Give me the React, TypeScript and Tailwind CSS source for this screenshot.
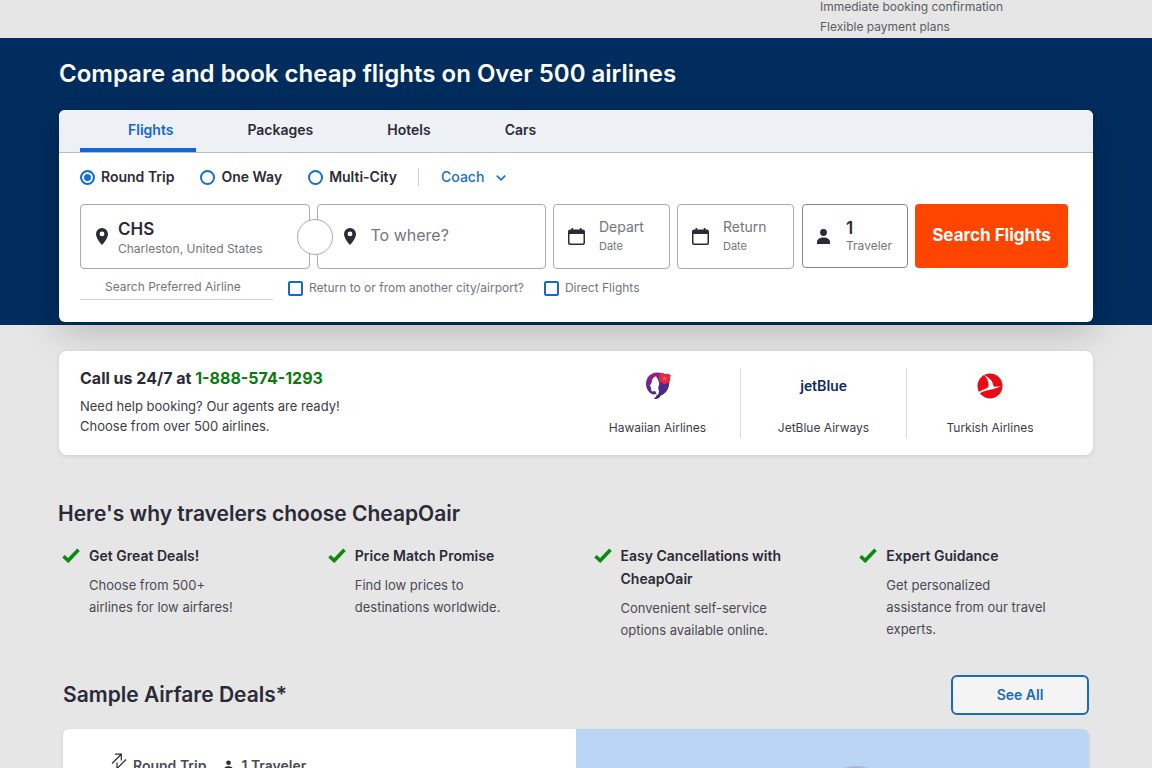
import React from "react";

const tabs = ["Flights", "Packages", "Hotels", "Cars"];

const reasons = [
  { title: "Get Great Deals!", text: "Choose from 500+ airlines for low airfares!" },
  { title: "Price Match Promise", text: "Find low prices to destinations worldwide." },
  {
    title: "Easy Cancellations with CheapOair",
    text: "Convenient self-service options available online.",
  },
  { title: "Expert Guidance", text: "Get personalized assistance from our travel experts." },
];

function Pin() {
  return (
    <svg viewBox="0 0 12 17" className="h-[17px] w-3 shrink-0 fill-[#2b2b37]" aria-hidden="true">
      <path
        fillRule="evenodd"
        d="M6 0a6 6 0 0 0-6 6c0 4.2 4.6 9.300 6 11 1.400-1.700 6-6.800 6-11a6 6 0 0 0-6-6Zm0 8.300a2.400 2.400 0 1 1 0-4.800 2.400 2.400 0 0 1 0 4.800Z"
      />
    </svg>
  );
}

function Calendar() {
  return (
    <svg viewBox="0 0 17 17" className="size-[17px] shrink-0" aria-hidden="true">
      <path
        fill="#2b2b37"
        fillRule="evenodd"
        d="M3.500 0h1.700v1.500h6.600V0h1.700v1.500H15a2 2 0 0 1 2 2V15a2 2 0 0 1-2 2H2a2 2 0 0 1-2-2V3.500a2 2 0 0 1 2-2h1.500V0ZM1.500 6v8.500a1 1 0 0 0 1 1h12a1 1 0 0 0 1-1V6h-14Z"
      />
    </svg>
  );
}

function Person({ className }: { className: string }) {
  return (
    <svg viewBox="0 0 13 15" className={className} aria-hidden="true">
      <circle cx="6.500" cy="3.500" r="3.400" />
      <path d="M0 15v-1.800C0 10.400 2.600 8.600 6.500 8.600s6.500 1.800 6.500 4.600V15H0Z" />
    </svg>
  );
}

function Tick() {
  return (
    <svg viewBox="0 0 18 15" className="mt-1 h-[15px] w-[18px] shrink-0" aria-hidden="true">
      <path d="M1.500 8.200 6.200 12.600 16.500 1.700" fill="none" stroke="#0a8a0f" strokeWidth="3.600" />
    </svg>
  );
}

function HawaiianLogo() {
  return (
    <svg viewBox="0 0 26 28" className="h-7 w-[26px]" aria-hidden="true">
      <defs>
        <linearGradient id="pualani" x1="0" y1="0" x2="0.300" y2="1">
          <stop offset="0" stopColor="#b01783" />
          <stop offset="0.500" stopColor="#5c2d91" />
          <stop offset="1" stopColor="#37277d" />
        </linearGradient>
      </defs>
      <path
        fill="url(#pualani)"
        d="M12 .5C5.500.5 1 5.500 1 12c0 5 3 9 7 10.500l3-.5c1 1.500-.2 3.500-2.500 4.600 3 1.200 6-.2 7.200-3.100C21 21.500 24 17 24.300 10L22 4C19.500 1.500 16 .5 12 .5Z"
      />
      <path
        fill="#fff"
        d="M11 4.200C8.600 4.900 7.200 6.500 7 9l-.6 2-1.700 2.900 1.300.9-.3 1.300.7.8-.2 1.900c.5 1.100 2.300.8 3.800.3 1.300 1.500 1.600 3 1.300 4.900 2-1.200 2.900-3.200 2.600-5.500-.9-2-.9-3.800.2-5.700.3-2.800-1-5.600-3.100-8.600Z"
      />
      <path fill="#4b2a88" d="M15.500 11c1.500 3 1.800 8-.5 12.500 5.500-2 8.800-6.500 9.300-13.500l-4-2Z" />
      <path
        fill="#e8283f"
        d="M14.500 2.500c1.500-1.800 4.500-1.500 5.500-.5 2-.8 4.500-.3 6 1.500-.8 1-1 2-.8 3.500.2 2.200-1.200 4-3.200 4.200-2 1.300-4 1-5.200-.7-2-.7-3.300-2-2.500-3.800-.5-1.700-.3-3.200.2-4.200Z"
      />
      <path fill="#ee5560" d="m19.500 4 .9 1.500 1.800.3-1.300 1.200.2 1.700-1.600-.8-1.600.8.3-1.700-1.200-1.200 1.700-.3Z" />
    </svg>
  );
}

function TurkishLogo() {
  return (
    <svg viewBox="0 0 26 26" className="size-[26px]" aria-hidden="true">
      <circle cx="13" cy="13" r="12.500" fill="#ea0a14" />
      <path
        fill="#fff"
        d="M6.800 2c5.200 2.200 9.200 6.300 9.400 10.300.1 1 .8 1.500 1.900 1.400l6-.5c-5.500 2.600-10 3.200-14.500 4.400-3 .8-5.500 1.800-7 3.100l-1-1.700c2.200-1.400 4.600-2.400 7-3.300 2-.8 3.200-2 3-4.500C11.400 7.700 9.700 4.500 6.800 2Z"
      />
    </svg>
  );
}

function DateField({ label }: { label: string }) {
  return (
    <button
      type="button"
      className="flex h-[65px] w-[117px] items-center gap-[14px] rounded border border-[#a9a9ae] bg-white pl-[14px] text-left text-[#75757d]"
    >
      <Calendar />
      <span className="flex flex-col pb-px">
        <span className="text-sm leading-5">{label}</span>
        <span className="text-[11px] leading-[18px]">Date</span>
      </span>
    </button>
  );
}

function Radio({ label, checked }: { label: string; checked?: boolean }) {
  return (
    <label className="flex items-center gap-[6px] text-sm leading-5 font-semibold text-[#2b2b37]">
      <input
        type="radio"
        name="trip"
        defaultChecked={checked}
        className="size-[15px] appearance-none rounded-full border-2 border-[#1470cc] bg-white checked:bg-[#1470cc] checked:shadow-[inset_0_0_0_2px_#fff]"
      />
      {label}
    </label>
  );
}

function Check({ label }: { label: string }) {
  return (
    <label className="flex items-center gap-[6px] text-xs leading-5 text-[#75757d]">
      <input
        type="checkbox"
        className="size-[15px] appearance-none rounded-[2px] border-2 border-[#1a6bb5] bg-white"
      />
      {label}
    </label>
  );
}

function SearchCard() {
  return (
    <div className="rounded-md bg-white shadow-[0_8px_40px_rgba(0,0,0,0.22)]">
      <nav className="flex h-[43px] gap-[3px] rounded-t-md border-b border-[#b9bec6] bg-[#edf0f5] pl-[21px]">
        {tabs.map((tab, i) => (
          <a
            key={tab}
            href="#"
            className={
              i === 0
                ? "border-b-4 border-[#1468c8] pt-[10px] pr-[23px] pl-12 text-sm leading-5 font-semibold text-[#1468c8]"
                : "pt-[10px] pr-[23px] pl-12 text-sm leading-5 font-semibold text-[#2b2b37]"
            }
          >
            {tab}
          </a>
        ))}
      </nav>
      <form className="flex flex-col pt-[14px] pr-[25px] pb-[22px] pl-[21px]">
        <div className="flex items-center">
          <div className="flex items-center gap-[26px]">
            <Radio label="Round Trip" checked />
            <Radio label="One Way" />
            <Radio label="Multi-City" />
          </div>
          <span className="mr-[22px] ml-[21px] h-[18px] w-px bg-[#cfcfd4]" />
          <div className="grid items-center">
            <select
              aria-label="Cabin class"
              className="col-start-1 row-start-1 appearance-none bg-transparent pr-[21px] text-sm leading-5 font-medium text-[#1470cc]"
            >
              <option>Coach</option>
            </select>
            <svg
              viewBox="0 0 10 6"
              className="pointer-events-none col-start-1 row-start-1 mt-[2px] h-[6px] w-[10px] justify-self-end"
              aria-hidden="true"
            >
              <path d="m.8.600 4.200 4.200L9.200.6" fill="none" stroke="#1470cc" strokeWidth="1.600" />
            </svg>
          </div>
        </div>
        <div className="mt-[17px] flex gap-[7px]">
          <div className="relative grid min-w-0 flex-1 grid-cols-2 gap-[7px]">
            <button
              type="button"
              className="flex h-[65px] items-center gap-[10px] rounded border border-[#a9a9ae] bg-white pl-[15px] text-left"
            >
              <Pin />
              <span className="flex flex-col pt-[5px]">
                <span className="text-[17px] leading-5 font-semibold text-[#2b2b37]">CHS</span>
                <span className="text-xs leading-5 text-[#75757d]">Charleston, United States</span>
              </span>
            </button>
            <div className="flex h-[65px] items-center gap-[15px] rounded border border-[#a9a9ae] bg-white pl-[26px]">
              <Pin />
              <input
                aria-label="To where?"
                placeholder="To where?"
                className="w-full min-w-0 bg-transparent pb-[3px] text-base outline-none placeholder:text-[#75757d]"
              />
            </div>
            <button
              type="button"
              aria-label="Swap"
              className="absolute top-[15px] left-1/2 size-9 -translate-x-4 rounded-full border border-[#a9a9ae] bg-white"
            />
          </div>
          <DateField label="Depart" />
          <DateField label="Return" />
          <button
            type="button"
            className="ml-px flex h-16 w-[106px] items-center gap-4 rounded border border-[#85858c] bg-white pl-[14px] text-left"
          >
            <Person className="h-[15px] w-[13px] fill-[#2b2b37]" />
            <span className="flex flex-col pt-px">
              <span className="text-[17px] leading-[18px] font-semibold text-[#2b2b37]">1</span>
              <span className="text-xs leading-[18px] text-[#75757d]">Traveler</span>
            </span>
          </button>
          <button
            type="submit"
            className="h-16 w-[153px] rounded bg-[#ff4500] text-[17px] font-bold whitespace-nowrap text-white"
          >
            Search Flights
          </button>
        </div>
        <div className="mt-[9px] flex items-start">
          <input
            aria-label="Search Preferred Airline"
            placeholder="Search Preferred Airline"
            className="mr-[15px] h-[22px] w-[193px] border-b border-[#cfcfd4] bg-transparent pr-2 pb-[5px] pl-[25px] text-xs outline-none placeholder:text-[#75757d]"
          />
          <div className="flex gap-5">
            <Check label="Return to or from another city/airport?" />
            <Check label="Direct Flights" />
          </div>
        </div>
      </form>
    </div>
  );
}

export default function App() {
  return (
    <div className="h-screen overflow-hidden bg-[#e6e6e6] font-['Inter',sans-serif] text-[#2b2b37]">
      <div className="flex h-[38px] flex-col justify-end overflow-hidden pb-px pl-[820px] text-xs leading-5 text-[#5c5c64]">
        <p>Immediate booking confirmation</p>
        <p>Flexible payment plans</p>
      </div>

      <section className="bg-[#002d5e] px-[59px] pt-5 pb-[3px]">
        <h1 className="mb-5 text-2xl leading-8 font-semibold text-white">
          Compare and book cheap flights on Over 500 airlines
        </h1>
        <SearchCard />
      </section>

      <section className="mx-[59px] mt-[26px] flex justify-between rounded-lg bg-white py-[17px] pr-5 pl-[21px] shadow-[0_1px_4px_rgba(0,0,0,0.12)]">
        <div>
          <h2 className="text-base leading-5 font-bold">
            Call us 24/7 at{" "}
            <a href="tel:1-888-574-1293" className="text-[#0a7a0f]">
              1-888-574-1293
            </a>
          </h2>
          <p className="mt-2 text-[13px] leading-5 text-[#3c3c46]">
            Need help booking? Our agents are ready!
            <br />
            Choose from over 500 airlines.
          </p>
        </div>
        <ul className="flex min-h-[70px] text-center text-xs leading-5 text-[#3c3c46]">
          <li className="flex w-[166px] flex-col items-center justify-between border-r border-[#d9d9dc] pt-1">
            <HawaiianLogo />
            <span>Hawaiian Airlines</span>
          </li>
          <li className="flex w-[166px] flex-col items-center justify-between border-r border-[#d9d9dc] pt-1">
            <span className="font-['Roboto',sans-serif] text-[15px] leading-7 font-medium text-[#0a2560]">
              jetBlue
            </span>
            <span>JetBlue Airways</span>
          </li>
          <li className="flex w-[166px] flex-col items-center justify-between pt-[5px]">
            <TurkishLogo />
            <span>Turkish Airlines</span>
          </li>
        </ul>
      </section>

      <section className="pt-[45px] pl-[58px]">
        <h2 className="text-[21px] leading-7 font-semibold">Here's why travelers choose CheapOair</h2>
        <div className="mt-4 grid grid-cols-4 pr-[31px]">
          {reasons.map((r) => (
            <div key={r.title} className="flex gap-[9px] pl-1">
              <Tick />
              <div className="max-w-[175px]">
                <h3 className="text-sm leading-[23px] font-semibold">{r.title}</h3>
                <p className="mt-[7px] max-w-[162px] text-[13px] leading-[22px] text-[#4a4a54]">{r.text}</p>
              </div>
            </div>
          ))}
        </div>
      </section>

      <section className="mt-[34px] px-[63px]">
        <div className="flex items-center justify-between">
          <h2 className="text-[21px] leading-7 font-semibold">Sample Airfare Deals*</h2>
          <button
            type="button"
            className="h-10 w-[138px] rounded-md border-2 border-[#1a6bb5] bg-[#f4f4f4] text-sm font-semibold text-[#1a6bb5]"
          >
            See All
          </button>
        </div>
        <article className="mt-[14px] grid grid-cols-2 overflow-hidden rounded-md bg-white shadow-[0_1px_3px_rgba(0,0,0,0.12)]">
          <div className="flex items-start pt-6 pl-12 text-sm leading-[26px] font-semibold text-[#4a4a54]">
            <svg viewBox="0 0 16 18" className="mr-[6px] h-[18px] w-4" aria-hidden="true">
              <path
                d="M1 10.500 10 1.500M4 1.200h6.300v6.300M15 6.500 6 15.500M6 9.500v6.300h6"
                fill="none"
                stroke="#2b2b37"
                strokeWidth="1.200"
              />
            </svg>
            <span>Round Trip</span>
            <Person className="mt-[7px] mr-2 ml-[18px] h-[11px] w-[9px] fill-[#2b2b37]" />
            <span>1 Traveler</span>
          </div>
          <div className="flex h-[150px] justify-center bg-[#bad5f5] pt-[37px] pl-[46px]">
            <svg viewBox="0 0 80 80" className="size-20" aria-hidden="true">
              <circle cx="40" cy="40" r="40" fill="#a5b8d4" />
            </svg>
          </div>
        </article>
      </section>
    </div>
  );
}
